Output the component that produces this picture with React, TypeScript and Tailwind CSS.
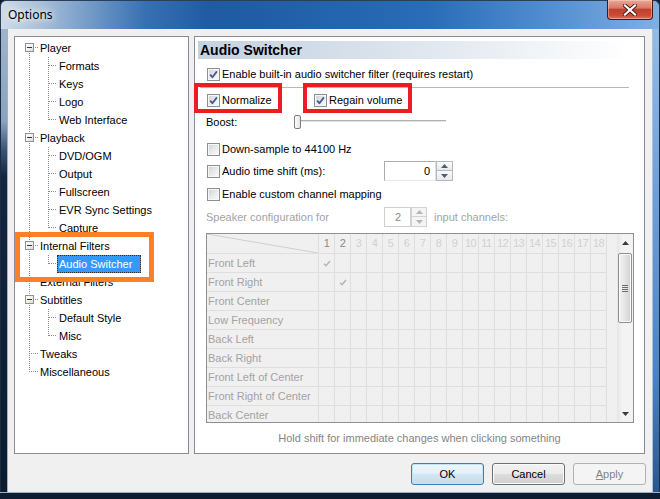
import React from "react";

type Spine = "full" | "down" | "up";

type TreeItem = {
  label: string;
  level: 0 | 1;
  box?: boolean;
  spine0: Spine;
  spine1?: Spine;
  selected?: boolean;
};

const treeItems: TreeItem[] = [
  { label: "Player", level: 0, box: true, spine0: "down" },
  { label: "Formats", level: 1, spine0: "full", spine1: "full" },
  { label: "Keys", level: 1, spine0: "full", spine1: "full" },
  { label: "Logo", level: 1, spine0: "full", spine1: "full" },
  { label: "Web Interface", level: 1, spine0: "full", spine1: "up" },
  { label: "Playback", level: 0, box: true, spine0: "full" },
  { label: "DVD/OGM", level: 1, spine0: "full", spine1: "full" },
  { label: "Output", level: 1, spine0: "full", spine1: "full" },
  { label: "Fullscreen", level: 1, spine0: "full", spine1: "full" },
  { label: "EVR Sync Settings", level: 1, spine0: "full", spine1: "full" },
  { label: "Capture", level: 1, spine0: "full", spine1: "up" },
  { label: "Internal Filters", level: 0, box: true, spine0: "full" },
  { label: "Audio Switcher", level: 1, spine0: "full", spine1: "up", selected: true },
  { label: "External Filters", level: 0, spine0: "full" },
  { label: "Subtitles", level: 0, box: true, spine0: "full" },
  { label: "Default Style", level: 1, spine0: "full", spine1: "full" },
  { label: "Misc", level: 1, spine0: "full", spine1: "up" },
  { label: "Tweaks", level: 0, spine0: "full" },
  { label: "Miscellaneous", level: 0, spine0: "up" },
];

const speakers = [
  "Front Left",
  "Front Right",
  "Front Center",
  "Low Frequency",
  "Back Left",
  "Back Right",
  "Front Left of Center",
  "Front Right of Center",
  "Back Center",
  "Side Left",
];

const channels = Array.from({ length: 18 }, (_, i) => i + 1);

const vDots =
  "bg-[repeating-linear-gradient(to_bottom,#8c8c8c_0_1px,transparent_1px_2px)]";
const hDots =
  "bg-[repeating-linear-gradient(to_right,#8c8c8c_0_1px,transparent_1px_2px)]";

function spineClass(s: Spine) {
  if (s === "down") return "top-[8px] bottom-0";
  if (s === "up") return "top-0 h-[9px]";
  return "top-0 bottom-0";
}

function TreeRow({ item }: { item: TreeItem }) {
  return (
    <div className="relative h-[18px] flex items-center">
      <span className={`absolute left-[14px] w-px ${vDots} ${spineClass(item.spine0)}`} />
      {item.level === 0 ? (
        <span className={`absolute left-[16px] top-[8px] h-px w-[7px] ${hDots}`} />
      ) : (
        <>
          <span className={`absolute left-[33px] w-px ${vDots} ${spineClass(item.spine1 ?? "full")}`} />
          <span className={`absolute left-[34px] top-[8px] h-px w-[8px] ${hDots}`} />
        </>
      )}
      {item.box && (
        <span className="absolute left-[10px] top-[4px] w-[9px] h-[9px] border border-[#919191] bg-[linear-gradient(135deg,#ffffff_0%,#f2f2f2_50%,#d9d9d9_100%)] flex items-center justify-center">
          <span className="w-[5px] h-px bg-[#1f3a66]" />
        </span>
      )}
      {item.selected ? (
        <span className="ml-[42px] w-[84px] h-[18px] pl-[1px] leading-[16px] bg-[#3399ff] text-white border border-dotted border-[#2b2b2b] whitespace-nowrap">
          {item.label}
        </span>
      ) : (
        <span className={`${item.level === 0 ? "ml-[23px]" : "ml-[42px]"} px-[2px] leading-[18px]`}>
          {item.label}
        </span>
      )}
    </div>
  );
}

function CheckBox({ checked }: { checked?: boolean }) {
  return (
    <span className="relative inline-flex w-[13px] h-[13px] shrink-0 border border-[#8e8f8f] bg-[linear-gradient(135deg,#cfd2d6_0%,#e9ebed_55%,#fbfbfb_100%)] shadow-[inset_0_0_0_1px_#f7f7f7]">
      {checked && (
        <svg viewBox="0 0 11 11" className="absolute left-0 top-0 w-[11px] h-[11px]">
          <path d="M2.2 5.6 L4.4 8.2 L8.9 2.4" fill="none" stroke="#48598c" strokeWidth="1.8" strokeLinejoin="round" />
        </svg>
      )}
    </span>
  );
}

function Arrow({ up, color }: { up?: boolean; color: string }) {
  return (
    <svg viewBox="0 0 7 4" className="w-[7px] h-[4px]">
      <path d={up ? "M0 4 L3.5 0 L7 4 Z" : "M0 0 L7 0 L3.5 4 Z"} fill={color} />
    </svg>
  );
}

function SpinButtons({ disabled, width }: { disabled?: boolean; width: string }) {
  const c = disabled ? "#b4b4b4" : "#4b5d82";
  const border = disabled ? "border-[#d2d2d2]" : "border-[#b5b8c0]";
  const bg = disabled
    ? "bg-[#f4f4f4]"
    : "bg-[linear-gradient(to_bottom,#fbfbfb,#e9e9e9)]";
  return (
    <div className={`flex flex-col h-[20px] ${width}`}>
      <div className={`h-[10px] border ${border} ${bg} flex items-center justify-center`}>
        <Arrow up color={c} />
      </div>
      <div className={`h-[10px] border border-t-0 ${border} ${bg} flex items-center justify-center`}>
        <Arrow color={c} />
      </div>
    </div>
  );
}

function CheckRow({ label, checked }: { label: string; checked?: boolean }) {
  return (
    <div className="flex items-center gap-[2px] h-[18px]">
      <CheckBox checked={checked} />
      <span>{label}</span>
    </div>
  );
}

function GridCheck() {
  return (
    <svg viewBox="0 0 8 7" className="w-[8px] h-[7px]">
      <path d="M1 3.8 L3 5.8 L7 1" fill="none" stroke="#b3b3b3" strokeWidth="1.4" />
    </svg>
  );
}

function ChannelGrid() {
  return (
    <div className="ml-[11px] mr-[10px] mt-[6px] h-[190px] border border-[#8e9096] bg-[#f0f0f0] flex">
      <div className="flex-1 overflow-hidden">
        <div className="flex h-[20px] border-b border-[#dedede] w-[400px]">
          <div className="relative w-[112px] h-full border-r border-[#dedede]">
            <svg className="absolute inset-0 w-full h-full" viewBox="0 0 111 19" preserveAspectRatio="none">
              <line x1="0" y1="0" x2="111" y2="19" stroke="#cfcfcf" strokeWidth="1" />
            </svg>
          </div>
          {channels.map((n) => (
            <div
              key={n}
              className={`w-[16px] h-full border-r border-[#dedede] text-center leading-[19px] tracking-[-0.5px] ${
                n <= 2 ? "text-[#8a8a8a]" : "text-[#d0d0d0]"
              }`}
            >
              {n}
            </div>
          ))}
        </div>
        {speakers.map((s, r) => (
          <div key={s} className="flex h-[19px] border-b border-[#dedede] w-[400px]">
            <div className="w-[112px] h-full border-r border-[#dedede] pl-[1px] leading-[18px] text-[#a3a3a3] whitespace-nowrap">
              {s}
            </div>
            {channels.map((n) => (
              <div key={n} className="w-[16px] h-full border-r border-[#dedede] flex items-center justify-center">
                {n === r + 1 && r < 2 ? <GridCheck /> : null}
              </div>
            ))}
          </div>
        ))}
      </div>
      <div className="w-[16px] h-full flex flex-col bg-[linear-gradient(to_right,#e6e6e6,#f3f3f3_35%,#f3f3f3)]">
        <div className="h-[17px] flex items-center justify-center">
          <Arrow up color="#3c3c3c" />
        </div>
        <div className="mt-[2px] h-[70px] mx-[1px] rounded-[2px] border border-[#8f8f8f] bg-[linear-gradient(to_right,#f4f4f4,#e6e6e6_45%,#d0d0d0)] shadow-[inset_0_0_0_1px_#fafafa] flex flex-col items-center justify-center gap-[1px]">
          <span className="w-[6px] h-px bg-[#6e6e6e]" />
          <span className="w-[6px] h-px bg-[#6e6e6e]" />
          <span className="w-[6px] h-px bg-[#6e6e6e]" />
          <span className="w-[6px] h-px bg-[#6e6e6e]" />
        </div>
        <div className="flex-1" />
        <div className="h-[17px] flex items-center justify-center">
          <Arrow color="#3c3c3c" />
        </div>
      </div>
    </div>
  );
}

function AudioSwitcherPage() {
  return (
    <div className="relative w-[451px] h-[418px] border border-[#898c95] bg-white flex flex-col">
      <div className="mt-[4px] ml-[3px] mr-[14px] h-[18px] pl-[2px] flex items-center bg-[linear-gradient(to_right,#c4d1e1_0%,#dbe3ec_45%,#ffffff_100%)] font-bold text-[14px] text-black">
        Audio Switcher
      </div>

      <div className="mt-[6px] ml-[12px]">
        <CheckRow label="Enable built-in audio switcher filter (requires restart)" checked />
      </div>

      <div className="mt-[4px] ml-[5px] w-[429px] h-px bg-[#b8b8b8]" />

      <div className="mt-[3px] ml-[12px] flex items-center">
        <div className="w-[107px]">
          <CheckRow label="Normalize" checked />
        </div>
        <CheckRow label="Regain volume" checked />
      </div>

      <div className="mt-[4px] ml-[11px] h-[18px] flex items-center">
        <span className="w-[88px]">Boost:</span>
        <div className="relative w-[152px] h-[14px]">
          <div className="absolute left-[2px] right-0 top-[5px] h-[3px] border-t border-[#b0b0b0] border-b border-b-[#ffffff] bg-[#e3e3e3]" />
          <div className="absolute left-0 top-0 w-[7px] h-[14px] rounded-[2px] border border-[#7e7e7e] bg-[linear-gradient(to_right,#fdfdfd,#e4e4e4)]" />
        </div>
      </div>

      <div className="mt-[9px] ml-[12px]">
        <CheckRow label="Down-sample to 44100 Hz" />
      </div>

      <div className="mt-[3px] ml-[12px] h-[20px] flex items-center">
        <div className="w-[177px]">
          <CheckRow label="Audio time shift (ms):" />
        </div>
        <div className="w-[52px] h-[20px] border border-[#abadb3] border-b-[#e3e9ef] border-r-[#dbdfe6] bg-white text-right pr-[5px] leading-[18px]">
          0
        </div>
        <SpinButtons width="w-[17px]" />
      </div>

      <div className="mt-[4px] ml-[12px]">
        <CheckRow label="Enable custom channel mapping" />
      </div>

      <div className="mt-[4px] ml-[11px] h-[20px] flex items-center text-[#a3a3a3]">
        <span className="w-[178px]">Speaker configuration for</span>
        <div className="w-[27px] h-[20px] border border-[#cfcfcf] bg-white text-right pr-[9px] leading-[18px] text-[#8a8a8a]">
          2
        </div>
        <SpinButtons disabled width="w-[16px]" />
        <span className="ml-[7px]">input channels:</span>
      </div>

      <ChannelGrid />

      <div className="mt-[6px] h-[18px] leading-[18px] text-center text-[#858585]">
        Hold shift for immediate changes when clicking something
      </div>

      {/* emphasis frames drawn over the options */}
      <div className="absolute left-[-1px] top-[46px] w-[88px] h-[30px] border-4 border-[#ed1c24]" />
      <div className="absolute left-[108px] top-[46px] w-[109px] h-[30px] border-4 border-[#ed1c24]" />
    </div>
  );
}

function DialogButton({
  label,
  kind,
}: {
  label: React.ReactNode;
  kind: "default" | "normal" | "disabled";
}) {
  const styles = {
    default:
      "border-[#3c7fb1] bg-[linear-gradient(to_bottom,#eef6fb_0%,#e3eff7_50%,#d3e5f1_51%,#c6dcec_100%)] shadow-[inset_0_0_0_1px_#bfe3f7] text-black",
    normal:
      "border-[#707070] bg-[linear-gradient(to_bottom,#f2f2f2_0%,#ebebeb_50%,#dddddd_51%,#cfcfcf_100%)] shadow-[inset_0_0_0_1px_#fbfbfb] text-black",
    disabled: "border-[#adb2b5] bg-[#f4f4f4] text-[#838383]",
  }[kind];
  return (
    <div className={`w-[73px] h-[22px] rounded-[3px] border flex items-center justify-center ${styles}`}>
      {label}
    </div>
  );
}

export default function App() {
  return (
    <div className="w-[660px] h-[499px] flex flex-col overflow-hidden bg-[#0e1d31] font-['Liberation_Sans',Arial,sans-serif] text-[11px] text-black">
      {/* caption */}
      <div className="h-[29px] shrink-0 flex items-start justify-between pl-[7px] pr-[6px] rounded-t-[6px] border border-b-0 border-[#2c3f58] bg-[linear-gradient(to_right,#cfdbe8_0%,#a9c0d8_6%,#6f98c6_14%,#3770b2_22%,#1f5aa2_32%,#2463ad_50%,#2a6cb8_65%,#4f8bcf_82%,#7fb0e2_100%)]">
        <span className="mt-[6px] font-['Noto_Sans',sans-serif] text-[12px] leading-[16px] text-black [text-shadow:0_0_6px_#ffffff,0_0_10px_#ffffff]">
          Options
        </span>
        <div className="w-[46px] h-[20px] -mt-px rounded-b-[4px] border border-t-0 border-[#4a1610] bg-[linear-gradient(to_bottom,#e9a99a_0%,#d77866_42%,#c0402e_50%,#c94a36_80%,#e07058_100%)] shadow-[inset_0_0_0_1px_rgba(255,220,210,0.45)] flex items-center justify-center">
          <svg viewBox="0 0 14 12" className="w-[14px] h-[12px]">
            <path d="M2 1.5 L12 10.5 M12 1.5 L2 10.5" stroke="#4b1a12" strokeWidth="4" strokeLinecap="square" />
            <path d="M2 1.5 L12 10.5 M12 1.5 L2 10.5" stroke="#ffffff" strokeWidth="2.2" strokeLinecap="square" />
          </svg>
        </div>
      </div>

      <div className="flex flex-1">
        {/* left frame */}
        <div className="w-[8px] border-l border-[#1b2c43] bg-[linear-gradient(to_bottom,#9fb4cc_0%,#8aa2c0_20%,#3b5576_26%,#142540_32%,#0d1b2e_100%)] shadow-[inset_-1px_0_0_#9db2c9]" />

        {/* client area */}
        <div className="w-[644px] bg-[#f0f0f0] flex flex-col pl-[6px] pt-[7px] pr-[7px]">
          <div className="flex gap-[5px]">
            <div className="relative w-[175px] h-[418px] border border-[#898c95] bg-white pt-[2px]">
              {treeItems.map((it) => (
                <TreeRow key={it.label} item={it} />
              ))}
              <div className="absolute left-0 top-[195px] w-[139px] h-[50px] border-[5px] border-[#ff7f27]" />
            </div>
            <AudioSwitcherPage />
          </div>

          <div className="mt-[9px] -mr-px flex justify-end gap-[8px]">
            <DialogButton label="OK" kind="default" />
            <DialogButton label="Cancel" kind="normal" />
            <DialogButton
              label={
                <span>
                  <span className="underline">A</span>pply
                </span>
              }
              kind="disabled"
            />
          </div>
        </div>

        {/* right frame */}
        <div className="w-[8px] border-r border-[#1b2c43] bg-[linear-gradient(to_bottom,#94bbe6_0%,#6f9fd8_35%,#4c82c4_75%,#2a568c_100%)] shadow-[inset_1px_0_0_#a9c3de]" />
      </div>

      {/* bottom frame */}
      <div className="h-[7px] shrink-0 bg-[#0e1d31] border-t border-[#9db2c9]" />
    </div>
  );
}
